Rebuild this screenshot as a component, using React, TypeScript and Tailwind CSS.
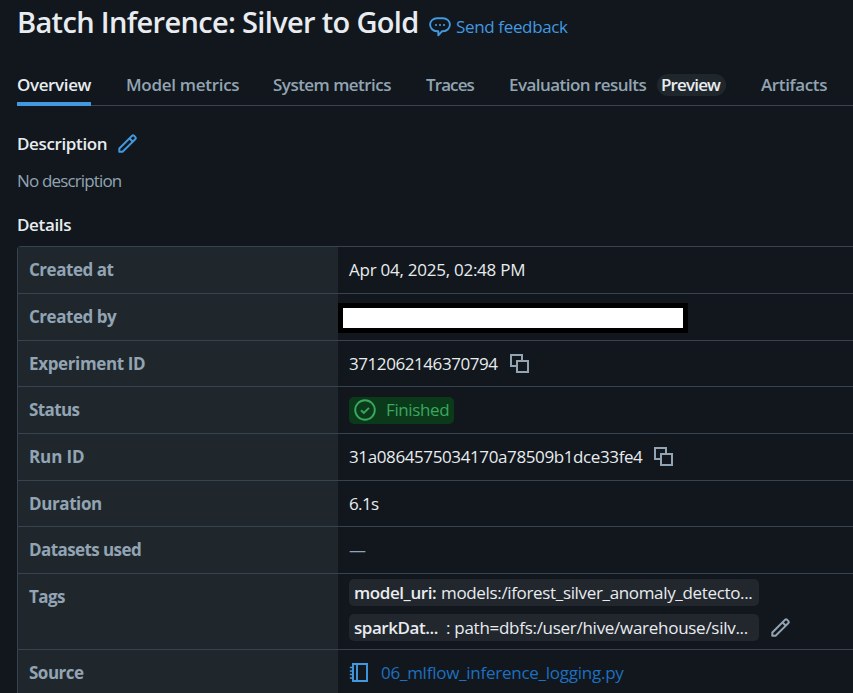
import type { ReactNode } from "react";

const PencilIcon = ({ className }: { className: string }) => (
  <svg viewBox="0 0 16 16" fill="currentColor" className={className}>
    <path
      fillRule="evenodd"
      clipRule="evenodd"
      d="M13.487 1.513a1.75 1.75 0 0 0-2.474 0L1.22 11.306a.75.75 0 0 0-.22.53v2.5c0 .414.336.75.75.75h2.5a.75.75 0 0 0 .53-.22l9.793-9.793a1.75 1.75 0 0 0 0-2.475zm-1.414 1.06a.25.25 0 0 1 .354 0l1.086 1.086a.25.25 0 0 1 0 .354L12 5.525l-1.44-1.439zM9.5 5.146l-7 7v1.44h1.44l7-7z"
    />
  </svg>
);

const CopyIcon = () => (
  <svg viewBox="0 0 19 19" fill="none" stroke="currentColor" strokeWidth="2" className="size-[19px] text-[#92a4b3]">
    <path d="M6 12H1V1h11v5" />
    <path d="M7 7h11v11H7z" />
  </svg>
);

const SpeechIcon = () => (
  <svg viewBox="0 0 22 20" className="h-5 w-[22px] text-[#4299e0]">
    <path
      d="M8 1.2h6c4 0 6.9 2.900 6.900 6.400 0 3.500-2.900 6.600-6.900 6.600h-.9L9.300 18.300v-4.100H8c-4 0-6.900-3.100-6.900-6.600C1.100 4.100 4 1.200 8 1.200z"
      fill="none"
      stroke="currentColor"
      strokeWidth="1.900"
      strokeLinejoin="round"
    />
    <path d="M6 7h2v2H6zM10 7h2v2h-2zM14 7h2v2h-2z" fill="currentColor" opacity=".8" />
  </svg>
);

const CheckCircleIcon = () => (
  <svg viewBox="0 0 22 22" fill="none" stroke="currentColor" strokeWidth="1.900" className="size-[22px]">
    <circle cx="11" cy="11" r="9.800" />
    <path d="M7 11.300l2.800 2.700 5.200-5.200" />
  </svg>
);

const NotebookIcon = () => (
  <svg viewBox="0 0 20 20" fill="none" stroke="currentColor" strokeWidth="1.900" className="size-5 text-[#4299e0]">
    <path d="M4 1h14v17H4zM8 1v17" />
    <path d="M.8 4.500H4M.8 8H4M.8 11.500H4M.8 15H4" strokeWidth="1.500" />
  </svg>
);

function Row({
  label,
  spacing,
  height,
  children,
}: {
  label: string;
  spacing: string;
  height: string;
  children: ReactNode;
}) {
  return (
    <div className={`flex border-t border-[#37444f] ${height}`}>
      <div
        className={`w-[320px] shrink-0 bg-[#1f272d] pt-[11px] pl-[11px] font-bold text-[#92a4b3] ${spacing}`}
      >
        {label}
      </div>
      <div className="flex grow items-start pl-[11px]">{children}</div>
    </div>
  );
}

export default function App() {
  return (
    <div className="h-[693px] w-[853px] overflow-hidden bg-[#11171c] pl-[17px] font-['Open_Sans','Noto_Sans',sans-serif] text-[17px] leading-6 whitespace-nowrap text-[#e8ecf0]">
      <header className="flex h-[62px] items-start">
        <h1 className="w-[412px] pt-[2px] text-[29px] leading-10 font-semibold tracking-[-0.67px]">
          Batch Inference: Silver to Gold
        </h1>
        <a className="flex pt-[15px] text-[#4299e0]">
          <span className="mt-[2px] mr-[5px]">
            <SpeechIcon />
          </span>
          <span className="tracking-[-0.35px]">Send feedback</span>
        </a>
      </header>

      <nav className="flex h-11 border-b border-[#37444f] pt-[11px] font-semibold text-[#92a4b3]">
        <div className="mr-[35px] h-[33px] w-[74px] border-b-4 border-[#4299e0] tracking-[-0.38px] text-[#e8ecf0]">
          Overview
        </div>
        <div className="w-[147px] tracking-[-0.29px]">Model metrics</div>
        <div className="w-[153px] tracking-[-0.53px]">System metrics</div>
        <div className="w-[83px] tracking-[-0.9px]">Traces</div>
        <div className="w-[148px] tracking-[-0.54px]">Evaluation results</div>
        <div className="mt-px mr-[35px] h-[22px] w-[69px] rounded-full bg-[#1f272d] pl-1 leading-[22px] tracking-[-0.85px] text-[#e8ecf0]">
          Preview
        </div>
        <div className="tracking-[-0.38px]">Artifacts</div>
      </nav>

      <section>
        <div className="flex pt-[26px]">
          <h2 className="w-[100px] font-semibold tracking-[-0.37px]">Description</h2>
          <PencilIcon className="mt-px size-[21px] text-[#4299e0]" />
        </div>
        <p className="pt-[13px] tracking-[-0.85px] text-[#92a4b3]">No description</p>
        <h2 className="pt-[20px] font-semibold tracking-[-0.36px]">Details</h2>
      </section>

      <section className="mt-[9px] rounded-tl-[4px] border-t border-l border-[#37444f] [&>div:first-child]:border-t-0">
        <Row label="Created at" spacing="tracking-[-0.47px]" height="h-[46px]">
          <span className="pt-[11px] tracking-[-0.25px]">Apr 04, 2025, 02:48 PM</span>
        </Row>
        <Row label="Created by" spacing="tracking-[-0.47px]" height="h-[47px]">
          <div className="mt-[9px] -ml-[11px] h-[30px] w-[350px] border-5 border-black bg-white" />
        </Row>
        <Row label="Experiment ID" spacing="tracking-[-0.36px]" height="h-[46px]">
          <span className="w-[161px] pt-[11px] tracking-[-0.43px]">3712062146370794</span>
          <span className="mt-[13px]">
            <CopyIcon />
          </span>
        </Row>
        <Row label="Status" spacing="tracking-[-0.6px]" height="h-[47px]">
          <div className="mt-[10px] flex h-[27px] w-[105px] items-start rounded-[5px] bg-[#0b3a1b] pt-[2px] pl-[5px] text-[#3ba65e]">
            <CheckCircleIcon />
            <span className="-mt-px ml-[10px] tracking-[-0.39px]">Finished</span>
          </div>
        </Row>
        <Row label="Run ID" spacing="tracking-[-0.1px]" height="h-[47px]">
          <span className="w-[305px] pt-[11px] tracking-[-0.39px]">31a0864575034170a78509b1dce33fe4</span>
          <span className="mt-[13px]">
            <CopyIcon />
          </span>
        </Row>
        <Row label="Duration" spacing="tracking-[-0.4px]" height="h-[46px]">
          <span className="pt-[11px] tracking-[-0.65px]">6.1s</span>
        </Row>
        <Row label="Datasets used" spacing="tracking-[-0.58px]" height="h-[47px]">
          <span className="pt-[11px] text-[#92a4b3]">—</span>
        </Row>
        <Row label="Tags" spacing="tracking-[-0.55px]" height="h-[76px]">
          <div className="flex w-[421px] flex-col gap-2 pt-[5px]">
            <div className="flex h-[27px] w-[410px] items-center rounded-[5px] bg-[#21272d] pl-[5px]">
              <span className="w-[87px] font-semibold tracking-[-0.42px]">model_uri:</span>
              <span className="tracking-[-0.34px]">models:/iforest_silver_anomaly_detecto...</span>
            </div>
            <div className="flex h-[27px] w-[410px] items-center rounded-[5px] bg-[#21272d] pl-[5px]">
              <span className="w-[92px] font-semibold tracking-[-0.45px]">sparkDat...</span>
              <span className="tracking-[-0.28px]">: path=dbfs:/user/hive/warehouse/silv...</span>
            </div>
          </div>
          <PencilIcon className="mt-[43px] size-[21px] text-[#92a4b3]" />
        </Row>
        <Row label="Source" spacing="tracking-[-0.5px]" height="h-[45px]">
          <span className="mt-[13px] mr-3">
            <NotebookIcon />
          </span>
          <a className="pt-[11px] tracking-[-0.25px] text-[#1f6fc0]">06_mlflow_inference_logging.py</a>
        </Row>
      </section>
    </div>
  );
}
